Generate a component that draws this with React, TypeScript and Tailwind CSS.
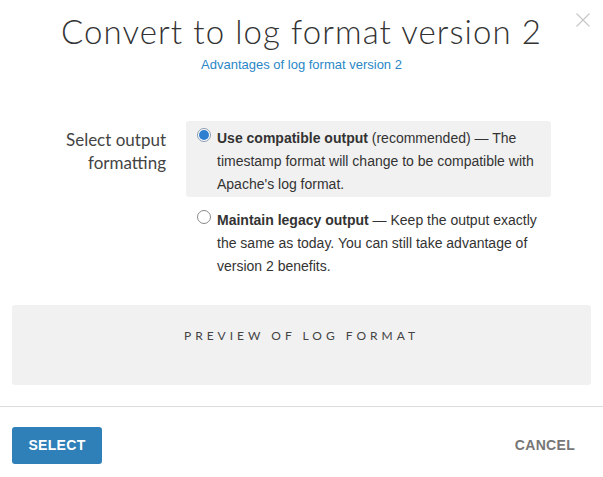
export default function App() {
  return (
    <div className="relative w-[603px] h-[477px] bg-white text-[#333]" style={{ fontFamily: '"Liberation Sans", Arial, sans-serif' }}>
      <button className="absolute right-[12px] top-[12px] text-[#c8c8c8]" aria-label="Close">
        <svg width="16" height="16" viewBox="0 0 16 16" fill="none" stroke="currentColor" strokeWidth="1.2">
          <path d="M1.5 1.5l13 13M14.5 1.5l-13 13" />
        </svg>
      </button>

      <div className="flex flex-col items-center pt-[11px]">
        <h1 className="text-[33px] leading-[40px] font-light tracking-[1.1px] text-[#333]" style={{ fontFamily: 'Lato, "Open Sans", sans-serif' }}>
          Convert to log format version 2
        </h1>
        <a href="#" className="mt-[5px] text-[13px] leading-[18px] text-[#2a87c7]">Advantages of log format version 2</a>
      </div>

      <div className="flex mt-[47px] pl-[40px] pr-[52px]">
        <div className="w-[126px] text-right text-[17px] leading-[23px] text-[#444] pt-[7px]" style={{ fontFamily: 'Lato, "Open Sans", sans-serif' }}>
          Select output formatting
        </div>
        <div className="ml-[20px] flex-1 flex flex-col gap-[4px]">
          <label className="flex gap-[6px] bg-[#f1f1f1] rounded-[3px] pl-[11px] pr-[6px] pt-[6px] pb-[1px] text-[14px] leading-[23px] text-[#333]">
            <span className="mt-[1px] shrink-0 w-[14px] h-[14px] rounded-full border border-[#8a9bb0] bg-white flex items-center justify-center">
              <span className="w-[10px] h-[10px] rounded-full bg-[#2f7fd1]" />
            </span>
            <span>
              <b>Use compatible output</b> (recommended) — The timestamp format will change to be compatible with Apache's log format.
            </span>
          </label>
          <label className="flex gap-[6px] pl-[11px] pr-[6px] pt-[8px] text-[14px] leading-[23px] text-[#333]">
            <span className="mt-[1px] shrink-0 w-[14px] h-[14px] rounded-full border border-[#8a8a8a] bg-white" />
            <span>
              <b>Maintain legacy output</b> — Keep the output exactly the same as today. You can still take advantage of version 2 benefits.
            </span>
          </label>
        </div>
      </div>

      <div className="mx-[12px] mt-[27px] h-[80px] bg-[#f1f1f1] rounded-[3px] flex justify-center pt-[22px]">
        <span className="text-[12px] tracking-[4px] text-[#444]" style={{ fontFamily: 'Lato, "Open Sans", sans-serif' }}>PREVIEW OF LOG FORMAT</span>
      </div>

      <div className="mt-[21px] border-t border-[#dcdcdc]" />

      <div className="flex items-center justify-between pl-[12px] pr-[28px] pt-[20px]">
        <button className="w-[90px] h-[37px] rounded-[3px] bg-[#2f80b9] text-white text-[14px] font-bold tracking-[0.3px]">SELECT</button>
        <button className="text-[14px] font-bold text-[#777] tracking-[0.3px]">CANCEL</button>
      </div>
    </div>
  );
}
